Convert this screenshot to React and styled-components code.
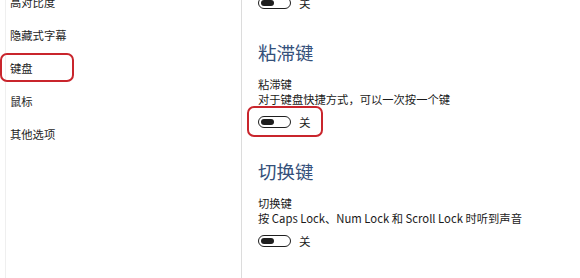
import React from 'react'
import styled, { createGlobalStyle } from 'styled-components'

const GlobalStyle = createGlobalStyle`
  html, body {
    margin: 0;
    padding: 0;
    background: #fff;
  }
  body {
    font-family: "Noto Sans CJK SC", "Noto Sans", sans-serif;
    color: #1b1b1b;
  }
`

const Window = styled.div`
  display: flex;
  width: 580px;
  height: 278px;
  overflow: hidden;
  background: #fff;
`

const Sidebar = styled.nav`
  width: 231px;
  flex-shrink: 0;
  margin-left: 5px;
  padding-left: 4px;
  border-left: 1px solid #efefef;
  border-right: 1px solid #dcdcdc;
`

const NavList = styled.ul`
  list-style: none;
  margin: -14px 0 0;
  padding: 0;
`

const NavItem = styled.li`
  position: relative;
  height: 33px;
  line-height: 33px;
  font-size: 11.3px;
  color: #1e1e1e;
  white-space: nowrap;

  &::after {
    content: '';
    display: ${p => (p.$marked ? 'block' : 'none')};
    position: absolute;
    left: -10px;
    top: 1px;
    width: 74px;
    height: 29px;
    box-sizing: border-box;
    border: 2px solid #c9252c;
    border-radius: 7px;
  }
`

const Main = styled.main`
  flex: 1;
  padding-left: 16px;
  margin-top: -3px;
`

const Section = styled.section`
  margin-top: 31px;
`

const Heading = styled.h2`
  margin: 0;
  font-size: 18.5px;
  line-height: 24px;
  font-weight: 400;
  color: #34507a;
`

const Label = styled.div`
  margin-top: 12.5px;
  font-size: 11.3px;
  line-height: 15px;
`

const Desc = styled.div`
  font-size: 11.3px;
  line-height: 14px;
  white-space: nowrap;
`

const ToggleRow = styled.div`
  position: relative;
  display: flex;
  align-items: center;
  gap: 8px;
  height: 12px;
  margin-top: ${p => (p.$first ? '0' : '10.5px')};

  &::after {
    content: '';
    display: ${p => (p.$marked ? 'block' : 'none')};
    position: absolute;
    left: -11px;
    top: -10.5px;
    width: 76px;
    height: 31px;
    box-sizing: border-box;
    border: 2px solid #c9252c;
    border-radius: 7px;
  }
`

const Track = styled.span`
  display: flex;
  align-items: center;
  width: 33px;
  height: 12px;
  box-sizing: border-box;
  padding-left: 2px;
  border: 1.8px solid #1f1f1f;
  border-radius: 6px;
`

const Knob = styled.span`
  width: 13px;
  height: 6px;
  border-radius: 3px;
  background: #1f1f1f;
`

const State = styled.span`
  font-size: 11.5px;
  line-height: 12px;
`

const Toggle = ({ first, marked }) => (
  <ToggleRow $first={first} $marked={marked}>
    <Track>
      <Knob />
    </Track>
    <State>关</State>
  </ToggleRow>
)

const navItems = ['高对比度', '隐藏式字幕', '键盘', '鼠标', '其他选项']

const sections = [
  {
    title: '粘滞键',
    label: '粘滞键',
    desc: '对于键盘快捷方式，可以一次按一个键',
    marked: true,
  },
  {
    title: '切换键',
    label: '切换键',
    desc: '按 Caps Lock、Num Lock 和 Scroll Lock 时听到声音',
  },
  {
    title: '筛选键',
    label: '筛选键',
    desc: '忽略或减慢短暂或重复的击键，并调整键盘重复速率',
  },
]

const App = () => (
  <Window>
    <GlobalStyle />
    <Sidebar>
      <NavList>
        {navItems.map(item => (
          <NavItem key={item} $marked={item === '键盘'}>
            {item}
          </NavItem>
        ))}
      </NavList>
    </Sidebar>
    <Main>
      <Toggle first />
      {sections.map(s => (
        <Section key={s.title}>
          <Heading>{s.title}</Heading>
          <Label>{s.label}</Label>
          <Desc>{s.desc}</Desc>
          <Toggle marked={s.marked} />
        </Section>
      ))}
    </Main>
  </Window>
)

export default App
